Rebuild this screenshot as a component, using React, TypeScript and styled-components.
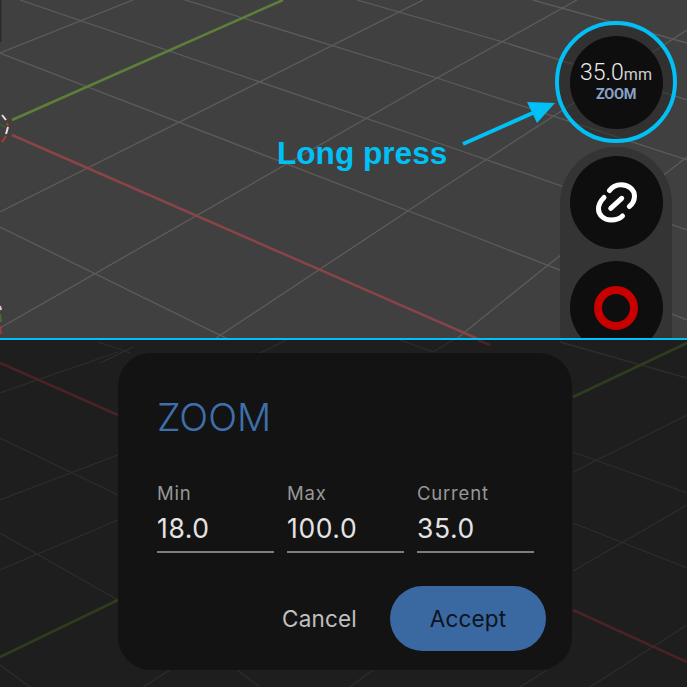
import React from 'react';
import styled, { createGlobalStyle } from 'styled-components';

const GlobalStyle = createGlobalStyle`
  html, body {
    margin: 0;
    padding: 0;
    background: #1e1e1e;
  }
  * {
    box-sizing: border-box;
  }
`;

const Screen = styled.div`
  width: 687px;
  height: 687px;
  overflow: hidden;
  display: grid;
  grid-template-rows: 338px 2px 347px;
  font-family: Inter, Roboto, 'Liberation Sans', sans-serif;
`;

const Viewport = styled.section`
  position: relative;
  overflow: hidden;
  background: #404040;
`;

const DimmedViewport = styled.section`
  position: relative;
  overflow: hidden;
  background: #1e1e1e;
  padding: 13px 115px 17px 118px;
  display: flex;
`;

const Divider = styled.div`
  background: #00c0f5;
`;

const GridCanvas = styled.svg`
  position: absolute;
  inset: 0;
  width: 100%;
  height: 100%;
  filter: blur(0.6px);
`;

const Annotation = styled.div`
  position: absolute;
  left: 277px;
  top: 135px;
  font-family: 'Liberation Sans', Arial, sans-serif;
  font-size: 31.6px;
  line-height: 36px;
  font-weight: 700;
  color: #00c0f5;
`;

const ArrowCanvas = styled.svg`
  position: absolute;
  left: 455px;
  top: 95px;
`;

const ControlColumn = styled.div`
  position: absolute;
  left: 555px;
  top: 21px;
  width: 122px;
  display: flex;
  flex-direction: column;
  align-items: center;
  gap: 4px;
`;

const ZoomRing = styled.div`
  width: 122px;
  height: 122px;
  border-radius: 50%;
  border: 4px solid #00c0f5;
  background: rgba(30, 30, 30, 0.45);
  display: flex;
  align-items: center;
  justify-content: center;
`;

const RoundButton = styled.div`
  width: 93px;
  height: 93px;
  flex: none;
  border-radius: 50%;
  background: #0e0e0e;
  display: flex;
  flex-direction: column;
  align-items: center;
  justify-content: center;
`;

const ButtonTray = styled.div`
  width: 112px;
  height: 300px;
  border-radius: 56px;
  background: #343434;
  padding: 9px 0;
  display: flex;
  flex-direction: column;
  align-items: center;
  gap: 12px;
`;

const FocalValue = styled.div`
  font-family: Roboto, 'Liberation Sans', sans-serif;
  font-size: 23px;
  line-height: 24px;
  font-weight: 300;
  color: #ececec;

  span {
    font-size: 16px;
    font-weight: 400;
    color: #cfcfcf;
  }
`;

const FocalLabel = styled.div`
  font-family: Roboto, 'Liberation Sans', sans-serif;
  font-size: 14.5px;
  line-height: 14px;
  font-weight: 700;
  letter-spacing: -0.3px;
  color: #88a2c6;
  margin-top: 1px;
  margin-bottom: 1px;
`;

const Dialog = styled.div`
  position: relative;
  width: 454px;
  height: 317px;
  border-radius: 33px;
  background: #131313;
  padding: 41px 26px 19px 39px;
  display: flex;
  flex-direction: column;
`;

const DialogTitle = styled.h2`
  margin: 0;
  font-size: 38px;
  line-height: 46px;
  font-weight: 300;
  color: #3e70ad;
`;

const FieldRow = styled.div`
  display: flex;
  gap: 13px;
  margin-top: 42px;
`;

const Field = styled.div`
  width: 117px;
  border-bottom: 2px solid #7e7e80;
  padding-bottom: 6px;
`;

const FieldLabel = styled.div`
  font-size: 18.5px;
  line-height: 22px;
  letter-spacing: 0.8px;
  color: #989898;
`;

const FieldValue = styled.div`
  font-size: 26.5px;
  line-height: 34px;
  letter-spacing: 0.6px;
  margin-top: 7px;
  color: #e4e4e4;
`;

const DialogActions = styled.div`
  margin-top: auto;
  display: flex;
  justify-content: flex-end;
  align-items: center;
  gap: 33px;
`;

const TextButton = styled.div`
  font-size: 22.5px;
  letter-spacing: 0.2px;
  color: #c0c0c0;
`;

const PillButton = styled.div`
  width: 156px;
  height: 65px;
  border-radius: 33px;
  background: #3a68a1;
  color: #0c1420;
  font-size: 22.5px;
  letter-spacing: 0.2px;
  display: flex;
  align-items: center;
  justify-content: center;
`;

type Seg = [number, number, number, number];

const TOP_GRID: Seg[] = [
  [20, 0, 450, 147], [450, 147, 687, 230],
  [0, 53, 450, 227], [450, 227, 687, 320],
  [0, 227, 240, 345],
  [185, 0, 437, 78], [437, 78, 687, 160],
  [357, 0, 503, 42], [503, 42, 687, 100],
  [533, 0, 687, 43],
  [0, 53, 133, 0],
  [0, 212, 423, 0],
  [0, 328, 437, 78], [437, 78, 577, 0],
  [210, 342, 450, 183], [450, 183, 687, 30],
  [455, 340, 548, 265], [548, 265, 687, 157],
];

const BOTTOM_GRID: Seg[] = [
  [0, 393, 118, 352], [100, 363, 133, 347],
  [0, 500, 118, 455],
  [0, 570, 118, 520],
  [0, 533, 118, 600],
  [0, 438, 118, 495],
  [98, 342, 130, 353],
  [0, 665, 30, 687],
  [143, 687, 170, 670], [237, 670, 260, 687], [350, 687, 373, 670], [520, 687, 547, 670],
  [260, 353, 287, 340], [400, 340, 433, 352], [433, 352, 453, 340],
  [687, 415, 573, 472],
  [687, 505, 573, 571],
  [687, 625, 590, 687],
  [560, 342, 687, 378],
  [573, 452, 687, 493],
  [573, 523, 687, 568],
];

const Lines = ({ segs, color, width }: { segs: Seg[]; color: string; width: number }) => (
  <g stroke={color} strokeWidth={width} fill="none">
    {segs.map((s, i) => (
      <line key={i} x1={s[0]} y1={s[1]} x2={s[2]} y2={s[3]} />
    ))}
  </g>
);

const TopGrid = () => (
  <GridCanvas viewBox="0 0 687 338">
    <Lines segs={TOP_GRID} color="#5c5c5c" width={1.3} />
    <Lines segs={[[12, 120, 283, 0]]} color="#5e7f3a" width={2.5} />
    <Lines segs={[[12, 135, 485, 342]]} color="#8a4448" width={2.5} />
    {/* origin gizmo and edge marks on the left side */}
    <g fill="none" strokeWidth={2}>
      <path d="M0.5 0 V42" stroke="#2a2a2a" />
      <path d="M2 115 L6 120" stroke="#e8e0dc" />
      <path d="M7 123 L8 126" stroke="#b03a2c" />
      <path d="M8 127 L6 134" stroke="#e8e0dc" />
      <path d="M6 136 L2 142" stroke="#b03a2c" />
      <path d="M5 127 L0 124" stroke="#3e5a30" />
      <path d="M0 306 L1 310" stroke="#e0c8c8" />
      <path d="M0 314 L1 322" stroke="#4a6a38" />
      <path d="M0 326 L1 334" stroke="#a03a38" />
    </g>
  </GridCanvas>
);

const BottomGrid = () => (
  <GridCanvas viewBox="0 340 687 347">
    <Lines segs={BOTTOM_GRID} color="#2d2d2d" width={1.3} />
    <Lines segs={[[0, 363, 118, 415], [573, 610, 687, 662], [478, 340, 490, 345]]} color="#4b2226" width={2.5} />
    <Lines segs={[[0, 657, 118, 600], [573, 397, 687, 343]]} color="#2e3d1e" width={2.5} />
  </GridCanvas>
);

const LinkIcon = () => (
  <svg width="42" height="42" viewBox="0 0 42 42" fill="none" stroke="#fff" strokeWidth="5" strokeLinecap="round">
    <path d="M14.5 8.5 C17 5 21 2.7 26 2.7 C34 2.7 39.5 8 39.5 14 C39.5 18 37.5 22 34.3 24.5" />
    <path d="M9 15.5 C6 18.5 3.5 23 3.5 27 C3.5 33 9 38 16 38 C21 38 25 36.5 27.5 34" />
    <path d="M15.7 26.3 L26.7 16.3" />
  </svg>
);

const RecordIcon = () => (
  <svg width="44" height="44" viewBox="0 0 44 44" fill="none">
    <circle cx="22" cy="22" r="18" stroke="#c80000" strokeWidth="8" />
  </svg>
);

const FIELDS = [
  { label: 'Min', value: '18.0' },
  { label: 'Max', value: '100.0' },
  { label: 'Current', value: '35.0' },
];

export default function App() {
  return (
    <Screen>
      <GlobalStyle />
      <Viewport>
        <TopGrid />
        <Annotation>Long press</Annotation>
        <ArrowCanvas width="104" height="54" viewBox="0 0 104 54">
          <path d="M8 49 L80 17" stroke="#00c0f5" strokeWidth="4" />
          <path d="M100 8 L72 7 L82 28 Z" fill="#00c0f5" />
        </ArrowCanvas>
        <ControlColumn>
          <ZoomRing>
            <RoundButton>
              <FocalValue>
                35.0<span>mm</span>
              </FocalValue>
              <FocalLabel>ZOOM</FocalLabel>
            </RoundButton>
          </ZoomRing>
          <ButtonTray>
            <RoundButton>
              <LinkIcon />
            </RoundButton>
            <RoundButton>
              <RecordIcon />
            </RoundButton>
          </ButtonTray>
        </ControlColumn>
      </Viewport>
      <Divider />
      <DimmedViewport>
        <BottomGrid />
        <Dialog>
          <DialogTitle>ZOOM</DialogTitle>
          <FieldRow>
            {FIELDS.map((f) => (
              <Field key={f.label}>
                <FieldLabel>{f.label}</FieldLabel>
                <FieldValue>{f.value}</FieldValue>
              </Field>
            ))}
          </FieldRow>
          <DialogActions>
            <TextButton>Cancel</TextButton>
            <PillButton>Accept</PillButton>
          </DialogActions>
        </Dialog>
      </DimmedViewport>
    </Screen>
  );
}
